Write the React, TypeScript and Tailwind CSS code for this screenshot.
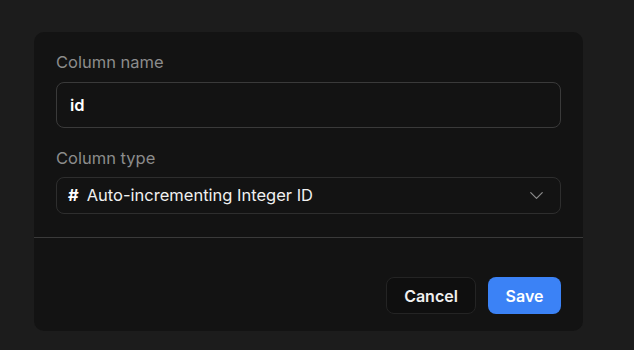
import React from 'react';
import { ChevronDown } from 'lucide-react';

const App: React.FC = () => {
  return (
    <div
      className="w-[634px] h-[350px] bg-[#1c1c1c] pt-[32px] pl-[34px]"
      style={{ fontFamily: 'Inter, "Noto Sans", sans-serif' }}
    >
      <div className="w-[549px] h-[299px] bg-[#131313] rounded-[10px] flex flex-col">
        <div className="px-[22px] pt-[19px]">
          <label className="block text-[16.5px] leading-[22px] text-[#8c8c8c]">Column name</label>
          <div className="mt-[9px] h-[46px] rounded-[8px] border border-[#3a3a3a] flex items-center px-[13px]">
            <span className="text-white text-[16.5px] font-semibold">id</span>
          </div>
          <label className="block mt-[19px] text-[16.5px] leading-[22px] text-[#8c8c8c]">Column type</label>
          <div className="mt-[8px] h-[37px] rounded-[8px] border border-[#2e2e2e] flex items-center pl-[11px] pr-[12px]">
            <span className="text-white text-[16.5px] font-bold mr-[8px]">#</span>
            <span className="text-[#f0f0f0] text-[16.5px] flex-1">Auto-incrementing Integer ID</span>
            <ChevronDown size={23} strokeWidth={1.3} className="text-[#8a8a8a]" />
          </div>
        </div>
        <div className="mt-[23px] h-px bg-[#3a3a3a]" />
        <div className="flex justify-end gap-[12px] px-[22px] pt-[39px]">
          <button className="w-[90px] h-[37px] rounded-[8px] border border-[#242424] bg-[#0f0f0f] text-[#f0f0f0] text-[16px] font-semibold">
            Cancel
          </button>
          <button className="w-[73px] h-[37px] rounded-[8px] bg-[#3b82f6] text-white text-[16px] font-semibold">
            Save
          </button>
        </div>
      </div>
    </div>
  );
};

export default App;
